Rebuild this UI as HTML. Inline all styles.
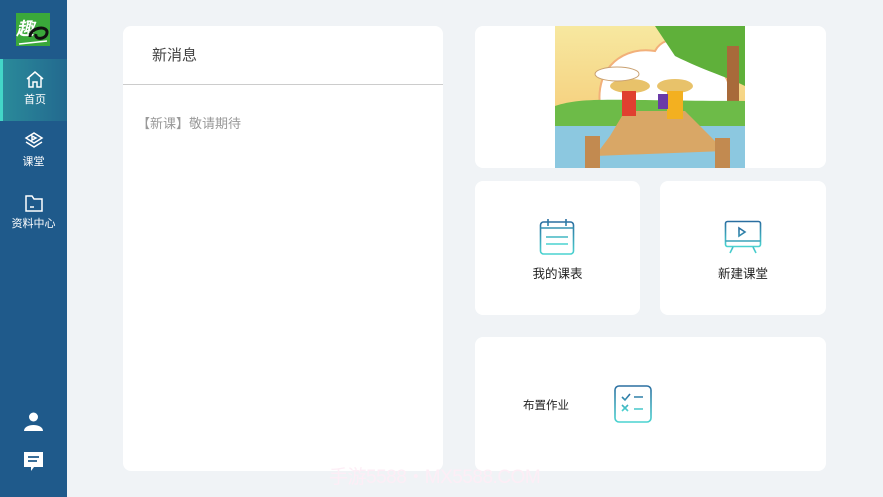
<!DOCTYPE html>
<html><head><meta charset="utf-8"><style>
*{margin:0;padding:0;box-sizing:border-box}
body{width:883px;height:497px;background:#f0f3f6;font-family:"Liberation Sans","Noto Sans CJK SC",sans-serif;position:relative;overflow:hidden}
.side{position:absolute;left:0;top:0;width:67px;height:497px;background:#1f5a8b}
.logo{position:absolute;left:16px;top:13px;width:34px;height:33px;background:#3aa83a;overflow:hidden}
.item{position:absolute;left:0;width:67px;height:62px;color:#fff;font-size:11px;text-align:center}
.item svg{display:block;margin:11px auto 2px}
.act{background:linear-gradient(90deg,#2a8a9a,#23698f);border-left:3px solid #43d6c8}
.card{position:absolute;background:#fff;border-radius:8px}
.lbl{position:absolute;font-size:12.5px;color:#222;text-align:center;width:100%}
</style></head><body>
<div class="side">
 <div class="logo"><svg width="34" height="33" viewBox="0 0 34 33"><text x="0" y="22" font-size="18" fill="#fff" font-family="Liberation Sans,Noto Sans CJK SC,sans-serif" font-style="italic" font-weight="bold">趣</text><path d="M14 24 C14 14 32 12 31 20 C30 27 18 27 20 21" fill="none" stroke="#111" stroke-width="3"/><path d="M3 31 L31 28" stroke="#fff" stroke-width="1.5"/></svg></div>
 <div class="item act" style="top:59px"><svg width="20" height="19" viewBox="0 0 20 19" fill="none" stroke="#fff" stroke-width="1.5"><path d="M2 9 L10 2 L18 9 M4 8 V17 H8 V12 H12 V17 H16 V8"/></svg>首页</div>
 <div class="item" style="top:121px"><svg width="20" height="19" viewBox="0 0 20 19" fill="none" stroke="#fff" stroke-width="1.5"><path d="M10 1 L18 6 L10 11 L2 6 Z M2 10 L10 15 L18 10 M8 4 L12 6 L8 8Z"/></svg>课堂</div>
 <div class="item" style="top:183px"><svg width="20" height="19" viewBox="0 0 20 19" fill="none" stroke="#fff" stroke-width="1.5"><path d="M2 2 H8 L10 5 H18 V17 H2 Z M6 13 H10"/></svg>资料中心</div>
 <svg style="position:absolute;left:24px;top:412px" width="19" height="19" viewBox="0 0 19 19" fill="#fff"><circle cx="9.5" cy="5" r="4.5"/><path d="M0 19 C0 11 19 11 19 19Z"/></svg>
 <svg style="position:absolute;left:24px;top:452px" width="19" height="20" viewBox="0 0 19 20"><path d="M0 0 H19 V15 H10 L7 19 V15 H0Z" fill="#fff"/><path d="M4 5 H15 M4 9 H13" stroke="#1f5a8b" stroke-width="1.8"/></svg>
</div>

<div class="card" style="left:123px;top:26px;width:320px;height:445px">
 <div style="position:absolute;left:29px;top:18px;font-size:15px;color:#444">新消息</div>
 <div style="position:absolute;left:0;top:58px;width:320px;height:1px;background:#ccc"></div>
 <div style="position:absolute;left:14px;top:87px;font-size:13px;color:#999">【新课】敬请期待</div>
</div>

<div class="card" style="left:475px;top:26px;width:351px;height:142px;overflow:hidden">
 <svg style="position:absolute;left:80px;top:0" width="190" height="142" viewBox="0 0 190 142">
  <defs><linearGradient id="sk" x1="0" y1="0" x2="0" y2="1"><stop offset="0" stop-color="#f7e8a0"/><stop offset="1" stop-color="#f5c26a"/></linearGradient></defs>
  <rect width="190" height="142" fill="url(#sk)"/>
  <path d="M45 80 C40 40 70 20 100 25 C110 5 150 10 150 40 C175 40 180 70 170 80Z" fill="#fff" stroke="#f2b07a" stroke-width="2"/>
  <path d="M100 0 H190 V60 C170 50 150 45 120 30 Z" fill="#5fb03a"/>
  <rect x="172" y="20" width="12" height="70" fill="#a86a3a"/>
  <path d="M0 80 C30 70 60 75 190 75 V100 H0Z" fill="#6dbb48"/>
  <rect x="0" y="100" width="190" height="42" fill="#8cc8e0"/>
  <path d="M55 110 L70 85 L130 85 L170 125 L40 130Z" fill="#d9a766"/>
  <ellipse cx="75" cy="60" rx="20" ry="7" fill="#e8c26a"/>
  <rect x="67" y="65" width="14" height="25" fill="#e04030"/>
  <ellipse cx="120" cy="60" rx="18" ry="7" fill="#e8c26a"/>
  <rect x="112" y="65" width="16" height="28" fill="#f3b020"/>
  <rect x="103" y="68" width="10" height="15" fill="#6a3aa8"/>
  <ellipse cx="62" cy="48" rx="22" ry="7" fill="#fff" stroke="#c9a070"/>
  <rect x="30" y="110" width="15" height="32" fill="#c28a50"/>
  <rect x="160" y="112" width="15" height="30" fill="#c28a50"/>
 </svg>
</div>

<div class="card" style="left:475px;top:181px;width:165px;height:134px">
 <svg style="position:absolute;left:64px;top:37px" width="36" height="38" viewBox="0 0 36 38"><defs><linearGradient id="g1" x1="0" y1="0" x2="0" y2="1"><stop offset="0" stop-color="#2a6ea0"/><stop offset="1" stop-color="#4ad3d0"/></linearGradient></defs><g fill="none" stroke="url(#g1)" stroke-width="1.6"><rect x="1.5" y="4" width="33" height="32" rx="3"/><path d="M1.5 10 H34.5 M9 1 V8 M27 1 V8 M7 19 H29 M7 26 H29"/></g></svg>
 <div class="lbl" style="top:82px">我的课表</div>
</div>
<div class="card" style="left:660px;top:181px;width:166px;height:134px">
 <svg style="position:absolute;left:64px;top:39px" width="38" height="34" viewBox="0 0 38 34"><defs><linearGradient id="g2" x1="0" y1="0" x2="0" y2="1"><stop offset="0" stop-color="#2a6ea0"/><stop offset="1" stop-color="#4ad3d0"/></linearGradient></defs><g fill="none" stroke="url(#g2)" stroke-width="1.6"><rect x="1.5" y="1.5" width="35" height="25" rx="2"/><path d="M1.5 21 H36.5 M15 8 L21 12 L15 16Z M9 27 L6 33 M29 27 L32 33"/></g></svg>
 <div class="lbl" style="top:82px">新建课堂</div>
</div>
<div class="card" style="left:475px;top:337px;width:351px;height:134px">
 <div style="position:absolute;left:48px;top:60px;font-size:11.5px;color:#222">布置作业</div>
 <svg style="position:absolute;left:139px;top:48px" width="38" height="38" viewBox="0 0 38 38"><defs><linearGradient id="g3" x1="0" y1="0" x2="0" y2="1"><stop offset="0" stop-color="#2a6ea0"/><stop offset="1" stop-color="#4ad3d0"/></linearGradient></defs><g fill="none" stroke="url(#g3)" stroke-width="1.6"><rect x="1" y="1" width="36" height="36" rx="4"/><path d="M8 12 L11 15 L16 9 M20 12 H29 M8 20 L14 26 M14 20 L8 26 M20 24 H29"/></g></svg>
</div>
<div style="position:absolute;left:329px;top:462px;font-size:19px;color:#fdeef6;letter-spacing:-0.5px">手游5588・MX5588.COM</div>
</body></html>
